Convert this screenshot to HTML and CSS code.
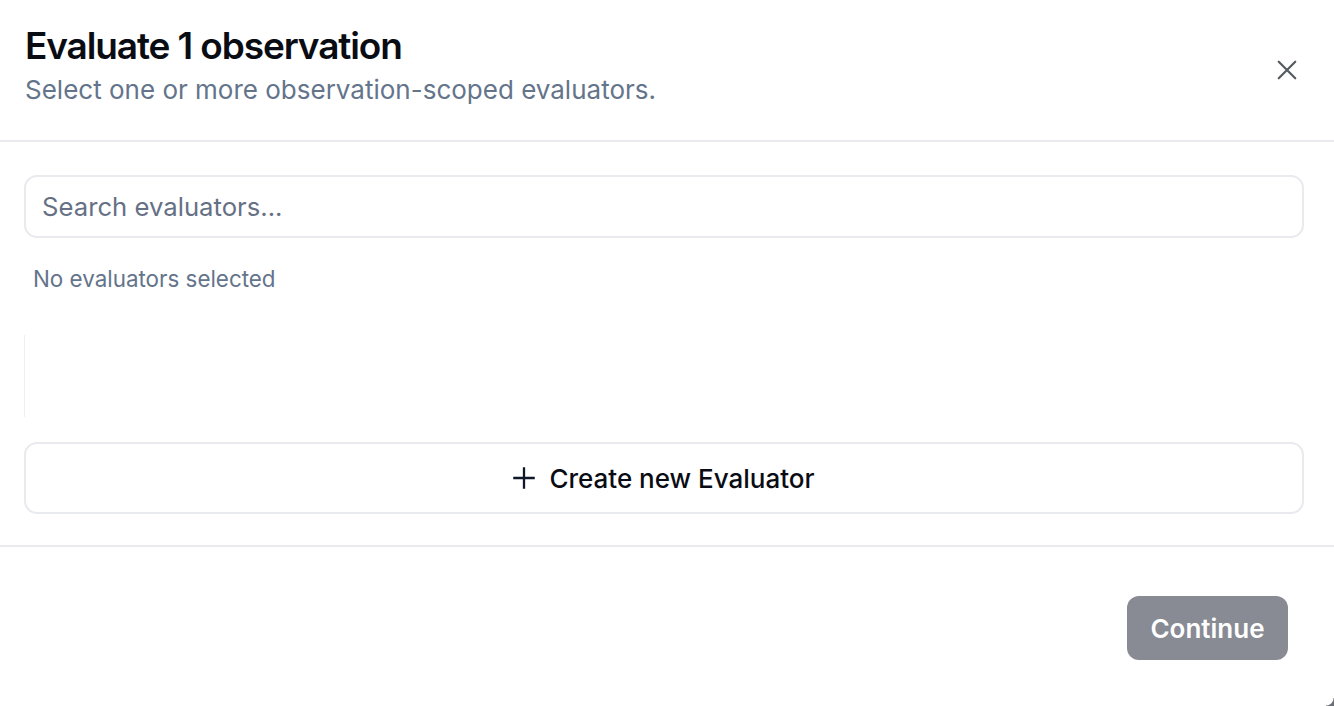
FILE: index.html
```html
<!DOCTYPE html>
<html>
<head>
<meta charset="utf-8">
<link rel="stylesheet" href="styles.css">
</head>
<body>
<div class="dialog">
  <header class="header">
    <div class="titles">
      <h1 class="title">Evaluate 1 observation</h1>
      <p class="subtitle">Select one or more observation-scoped evaluators.</p>
    </div>
    <button class="close" aria-label="Close">
      <svg width="22" height="22" viewBox="0 0 24 24" fill="none" stroke="#555a61" stroke-width="2.4" stroke-linecap="round"><path d="M3 3L21 21M21 3L3 21"/></svg>
    </button>
  </header>
  <main class="content">
    <div class="search">Search evaluators...</div>
    <div class="status">No evaluators selected</div>
    <div class="list"></div>
    <button class="create">
      <svg width="22" height="22" viewBox="0 0 24 24" fill="none" stroke="#0f172a" stroke-width="2.5" stroke-linecap="square"><path d="M12 1.5V22.5M1.5 12H22.5"/></svg>
      <span>Create new Evaluator</span>
    </button>
  </main>
  <footer class="footer">
    <button class="continue">Continue</button>
  </footer>
</div>
<div class="corner"></div>
</body>
</html>
```
FILE: styles.css
```css
* { box-sizing: border-box; }
html, body { margin: 0; padding: 0; }
body {
  width: 1334px;
  height: 706px;
  overflow: hidden;
  background: #ffffff;
  font-family: Inter, "Liberation Sans", sans-serif;
  position: relative;
}
.dialog {
  display: flex;
  flex-direction: column;
  height: 706px;
}
.header {
  display: flex;
  align-items: center;
  justify-content: space-between;
  padding: 24px 36px 0 25px;
  height: 142px;
  border-bottom: 2px solid #e8eaee;
}
.titles { margin-top: -30px; }
.title {
  margin: 0;
  font-size: 37px;
  font-weight: 600;
  letter-spacing: -0.03em;
  color: #0a0c14;
  line-height: 44px;
}
.subtitle {
  margin: 2px 0 0;
  font-size: 26px;
  color: #64748b;
  line-height: 40px;
}
.close {
  border: 0;
  background: none;
  padding: 0;
  display: flex;
  margin-top: -24px;
}
.content {
  padding: 33px 30px 0 24px;
  display: flex;
  flex-direction: column;
  border-bottom: 2px solid #e8eaee;
  height: 405px;
}
.search {
  height: 63px;
  border: 2px solid #e8eaee;
  border-radius: 13px;
  padding: 0 16px;
  display: flex;
  align-items: center;
  font-size: 25.7px;
  color: #667085;
}
.status {
  margin-top: 26px;
  padding-left: 9px;
  font-size: 22.4px;
  color: #64748b;
  line-height: 30px;
}
.list {
  margin-top: 41px;
  height: 82px;
  border-left: 1.5px solid #eeeff2;
}
.create {
  margin-top: 25px;
  height: 72px;
  border: 2px solid #e8eaee;
  border-radius: 13px;
  background: #fff;
  display: flex;
  align-items: center;
  justify-content: center;
  gap: 14px;
  font-family: inherit;
  font-size: 26px;
  font-weight: 500;
  color: #0a0c14;
  padding: 0;
}
.footer {
  flex: 1;
  display: flex;
  justify-content: flex-end;
  align-items: flex-start;
  padding: 49px 46px 0 0;
}
.continue {
  width: 161px;
  height: 64px;
  border: 0;
  border-radius: 12px;
  background: #888b94;
  color: #ffffff;
  font-family: inherit;
  font-size: 26px;
  font-weight: 600;
}
.corner {
  position: absolute;
  right: 0;
  bottom: 0;
  width: 8px;
  height: 8px;
  background: radial-gradient(circle at 0 0, transparent 7px, #6b6e74 8px);
}
```
